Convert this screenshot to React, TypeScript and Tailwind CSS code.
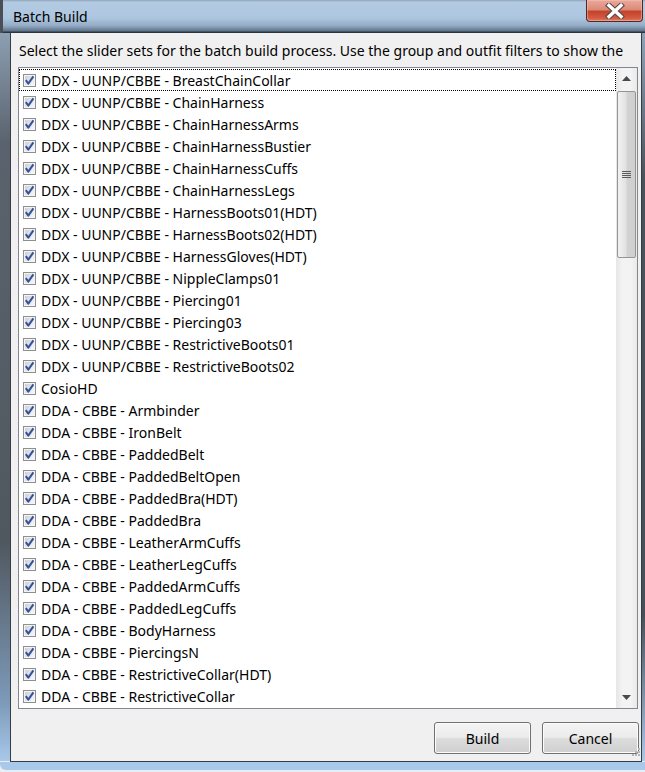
import React from "react";

const sets: string[] = [
  "DDX - UUNP/CBBE - BreastChainCollar",
  "DDX - UUNP/CBBE - ChainHarness",
  "DDX - UUNP/CBBE - ChainHarnessArms",
  "DDX - UUNP/CBBE - ChainHarnessBustier",
  "DDX - UUNP/CBBE - ChainHarnessCuffs",
  "DDX - UUNP/CBBE - ChainHarnessLegs",
  "DDX - UUNP/CBBE - HarnessBoots01(HDT)",
  "DDX - UUNP/CBBE - HarnessBoots02(HDT)",
  "DDX - UUNP/CBBE - HarnessGloves(HDT)",
  "DDX - UUNP/CBBE - NippleClamps01",
  "DDX - UUNP/CBBE - Piercing01",
  "DDX - UUNP/CBBE - Piercing03",
  "DDX - UUNP/CBBE - RestrictiveBoots01",
  "DDX - UUNP/CBBE - RestrictiveBoots02",
  "CosioHD",
  "DDA - CBBE - Armbinder",
  "DDA - CBBE - IronBelt",
  "DDA - CBBE - PaddedBelt",
  "DDA - CBBE - PaddedBeltOpen",
  "DDA - CBBE - PaddedBra(HDT)",
  "DDA - CBBE - PaddedBra",
  "DDA - CBBE - LeatherArmCuffs",
  "DDA - CBBE - LeatherLegCuffs",
  "DDA - CBBE - PaddedArmCuffs",
  "DDA - CBBE - PaddedLegCuffs",
  "DDA - CBBE - BodyHarness",
  "DDA - CBBE - PiercingsN",
  "DDA - CBBE - RestrictiveCollar(HDT)",
  "DDA - CBBE - RestrictiveCollar",
];

function CheckBox() {
  return (
    <svg width="13" height="13" viewBox="0 0 13 13" className="shrink-0">
      <defs>
        <linearGradient id="cbfill" x1="0" y1="0" x2="1" y2="1">
          <stop offset="0" stopColor="#cdd1d7" />
          <stop offset="1" stopColor="#f7f7f8" />
        </linearGradient>
      </defs>
      <rect x="0.5" y="0.5" width="12" height="12" fill="#f4f4f4" stroke="#8e8f8f" />
      <rect x="2" y="2" width="9" height="9" fill="url(#cbfill)" />
      <path
        d="M2.8 6.2 L5.3 9.6 L10.4 2.4"
        fill="none"
        stroke="#34519a"
        strokeWidth="2"
        strokeLinejoin="round"
      />
    </svg>
  );
}

function Row({ label, focused }: { label: string; focused?: boolean }) {
  return (
    <div
      className={
        "h-[22px] flex items-center pl-[4px] gap-[5px] text-[14px] text-black whitespace-nowrap " +
        (focused ? "outline outline-1 outline-dotted outline-black -outline-offset-1" : "")
      }
    >
      <CheckBox />
      <span className="leading-[22px] relative top-[1px]">{label}</span>
    </div>
  );
}

function ScrollBar() {
  return (
    <div className="w-[21px] shrink-0 flex flex-col bg-[linear-gradient(to_right,#e6e6e6,#f3f3f3_30%,#f3f3f3_70%,#e9e9e9)]">
      <div className="h-[21px] flex items-center justify-center">
        <svg width="9" height="5" viewBox="0 0 9 5">
          <path d="M0 5 L4.5 0 L9 5 Z" fill="#4a4a4a" />
        </svg>
      </div>
      <div className="mx-[1px] mt-[2px] h-[167px] rounded-[2px] border border-[#959595] bg-[linear-gradient(to_right,#f2f2f2,#e2e2e2_45%,#d2d2d2_55%,#cfcfcf)] flex items-center justify-center">
        <svg width="9" height="9" viewBox="0 0 9 9">
          <path d="M0 1.5 H9 M0 3.5 H9 M0 5.5 H9 M0 7.5 H9" stroke="#5b5b5b" strokeWidth="1" />
        </svg>
      </div>
      <div className="flex-1" />
      <div className="h-[21px] flex items-center justify-center">
        <svg width="9" height="5" viewBox="0 0 9 5">
          <path d="M0 0 L9 0 L4.5 5 Z" fill="#4a4a4a" />
        </svg>
      </div>
    </div>
  );
}

function Button({ children }: { children: React.ReactNode }) {
  return (
    <button className="w-[97px] h-[32px] rounded-[3px] border border-[#707070] bg-[linear-gradient(to_bottom,#f4f4f4,#ebebeb_48%,#dddddd_50%,#cfcfcf)] shadow-[inset_0_0_0_1px_#fcfcfc] text-[14px] text-black">
      {children}
    </button>
  );
}

function CloseButton() {
  return (
    <div className="absolute top-0 right-[2px] w-[57px] h-[22px] rounded-b-[4px] border border-t-0 border-[#4f2a24] bg-[linear-gradient(to_bottom,#eaa99c,#dc8a78_45%,#c4432a_55%,#d35a42_85%,#e07a62)] shadow-[inset_0_0_0_1px_rgba(255,200,190,0.45)] flex items-center justify-center">
      <svg width="22" height="16" viewBox="0 0 22 16">
        <path d="M5 2.5 L17 13.5 M17 2.5 L5 13.5" stroke="#5a4a48" strokeWidth="5.6" strokeLinecap="square" />
        <path d="M5 2.5 L17 13.5 M17 2.5 L5 13.5" stroke="#ffffff" strokeWidth="3.4" strokeLinecap="square" />
      </svg>
    </div>
  );
}

export default function App() {
  return (
    <div
      className="w-[645px] h-[772px] overflow-hidden flex flex-col bg-[#e9eef4]"
      style={{ fontFamily: '"Noto Sans", "Open Sans", sans-serif' }}
    >
      {/* title bar */}
      <div className="h-[33px] shrink-0 relative flex">
        <div className="w-[3px] bg-[#4b4f55]" />
        <div className="flex-1 relative bg-[linear-gradient(to_bottom,#8ea3b9,#b3cae2_6%,#adc6df_55%,#93abc4_78%,#5d7389_94%,#2c343d_97%,#2c343d)]">
          <span className="absolute left-[10px] top-[7px] text-[14px] leading-[20px] text-black">
            Batch Build
          </span>
          <CloseButton />
        </div>
      </div>

      {/* frame sides + client area */}
      <div className="flex-1 flex min-h-0">
        <div className="w-[10px] shrink-0 bg-[linear-gradient(to_bottom,#8c9fb3,#5a636d_15%,#50585f_70%,#7d9ab9_92%,#a8c8ea)]" />
        <div className="flex-1 min-w-0 flex flex-col bg-[#f0f0f0] border-l border-r border-[#353d46] overflow-hidden">
          <div className="pt-[8px] pl-[8px] h-[27px] text-[14px] leading-[20px] text-black whitespace-nowrap">
            Select the slider sets for the batch build process. Use the group and outfit filters to show the
          </div>
          <div className="mt-[7px] ml-[7px] mr-[3px] h-[642px] border border-[#828790] bg-white flex">
            <div className="flex-1 min-w-0 overflow-hidden pt-[1px]">
              {sets.map((s, i) => (
                <Row key={s + i} label={s} focused={i === 0} />
              ))}
            </div>
            <ScrollBar />
          </div>
          <div className="mt-[13px] mr-[2px] flex justify-end gap-[11px]">
            <Button>Build</Button>
            <Button>Cancel</Button>
          </div>
          <div className="flex-1 relative">
            <svg className="absolute right-[1px] bottom-[4px]" width="10" height="10" viewBox="0 0 10 10">
              <g fill="#b6b6b6">
                <rect x="8" y="1" width="2" height="2" />
                <rect x="5" y="4" width="2" height="2" />
                <rect x="8" y="4" width="2" height="2" />
                <rect x="2" y="7" width="2" height="2" />
                <rect x="5" y="7" width="2" height="2" />
                <rect x="8" y="7" width="2" height="2" />
              </g>
            </svg>
          </div>
        </div>
        <div className="w-[3px] shrink-0 bg-[linear-gradient(to_bottom,#8ea3b9,#49525c_20%,#47505a_80%,#a8c8ea)]" />
      </div>

      {/* bottom frame */}
      <div className="h-[11px] shrink-0 flex flex-col">
        <div className="h-[1px] ml-[10px] mr-[3px] bg-[#353d46]" />
        <div className="h-[8px] bg-[#a9c9eb] rounded-bl-[6px]" />
        <div className="flex-1 bg-[#e9eef4]" />
      </div>
    </div>
  );
}
